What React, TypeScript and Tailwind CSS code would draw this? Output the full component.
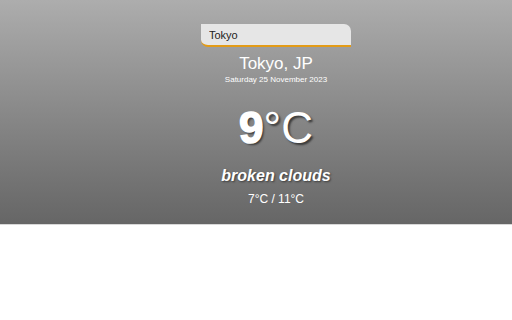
export default function App() {
  return (
    <div className="w-[512px] h-[320px] bg-white" style={{ fontFamily: '"Liberation Sans", Arial, sans-serif' }}>
      <div className="h-[225px] bg-gradient-to-b from-[#adadad] to-[#666666] border-b border-[#d8d8d8] flex flex-col items-center pl-[40px] pt-[24px] text-white">
        <input
          defaultValue="Tokyo"
          className="w-[150px] h-[23px] bg-[#e6e6e6] text-[#222] text-[11px] px-[8px] rounded-tr-[7px] rounded-bl-[7px] border-b-2 border-[#e39b16] outline-none"
        />
        <div className="text-[17px] leading-[20px] mt-[7px]">Tokyo, JP</div>
        <div className="text-[8px] leading-[10px] mt-[1px]">Saturday 25 November 2023</div>
        <div className="mt-[18px] text-[44px] leading-[50px] [text-shadow:2px_2px_2px_rgba(0,0,0,0.55)]">
          <span className="font-bold [-webkit-text-stroke:1.5px_white]">9</span>
          <span className="font-normal">°C</span>
        </div>
        <div className="mt-[13px] text-[16px] leading-[20px] font-bold italic [text-shadow:1px_1px_2px_rgba(0,0,0,0.5)]">broken clouds</div>
        <div className="mt-[6px] text-[12px] leading-[14px]">7°C / 11°C</div>
      </div>
    </div>
  );
}
